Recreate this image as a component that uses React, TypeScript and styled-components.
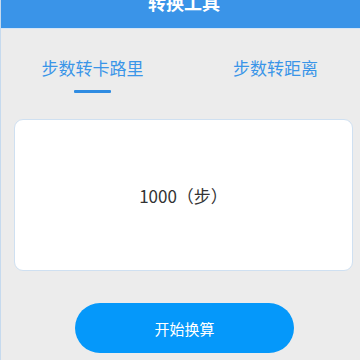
import React, { useState } from "react";
import styled, { createGlobalStyle } from "styled-components";

const Global = createGlobalStyle`
  html, body {
    margin: 0;
    padding: 0;
    background: #ececec;
    overflow: hidden;
  }
  body {
    font-family: "Noto Sans CJK SC", "Noto Sans", sans-serif;
  }
`;

const Page = styled.div`
  width: 366px;
  min-height: 360px;
  border-left: 1px solid #c6daee;
  background: #ececec;
  display: flex;
  flex-direction: column;
`;

const Header = styled.header`
  background: #3a94e8;
  border-bottom: 1px solid #d4e5f6;
  display: flex;
  justify-content: center;
  align-items: flex-end;
  padding-bottom: 17px;
  box-sizing: content-box;
  height: 11px;
  overflow: visible;
`;

const Title = styled.h1`
  margin: 0;
  font-size: 18px;
  line-height: 18px;
  font-weight: 700;
  color: #ffffff;
`;

const Tabs = styled.nav`
  display: flex;
  padding-top: 27px;
`;

const Tab = styled.button<{ $active?: boolean }>`
  flex: 1;
  display: flex;
  flex-direction: column;
  align-items: center;
  background: none;
  border: none;
  padding: 0;
  font-family: inherit;
  font-size: 17px;
  line-height: 24px;
  color: #3a95e8;
  cursor: pointer;

  &::after {
    content: "";
    display: block;
    margin-top: 10px;
    width: 37px;
    height: 3px;
    border-radius: 1px;
    background: ${(p) => (p.$active ? "#2f8ce2" : "transparent")};
  }
`;

const Card = styled.div`
  margin: 26px 14px 0 13px;
  height: 150px;
  background: #ffffff;
  border: 1px solid #cfe0f1;
  border-radius: 9px;
  display: flex;
  align-items: center;
  justify-content: center;
`;

const Value = styled.span`
  font-size: 17px;
  color: #333333;
`;

const StartButton = styled.button`
  align-self: center;
  margin-top: 32px;
  margin-left: 1px;
  width: 219px;
  height: 50px;
  border: none;
  border-radius: 25px;
  background: #0598fa;
  color: #ffffff;
  font-family: inherit;
  font-size: 15px;
  cursor: pointer;
`;

export default function App() {
  const [tab, setTab] = useState(0);
  return (
    <>
      <Global />
      <Page>
        <Header>
          <Title>转换工具</Title>
        </Header>
        <Tabs>
          <Tab $active={tab === 0} onClick={() => setTab(0)}>
            步数转卡路里
          </Tab>
          <Tab $active={tab === 1} onClick={() => setTab(1)}>
            步数转距离
          </Tab>
        </Tabs>
        <Card>
          <Value>1000（步）</Value>
        </Card>
        <StartButton>开始换算</StartButton>
      </Page>
    </>
  );
}
